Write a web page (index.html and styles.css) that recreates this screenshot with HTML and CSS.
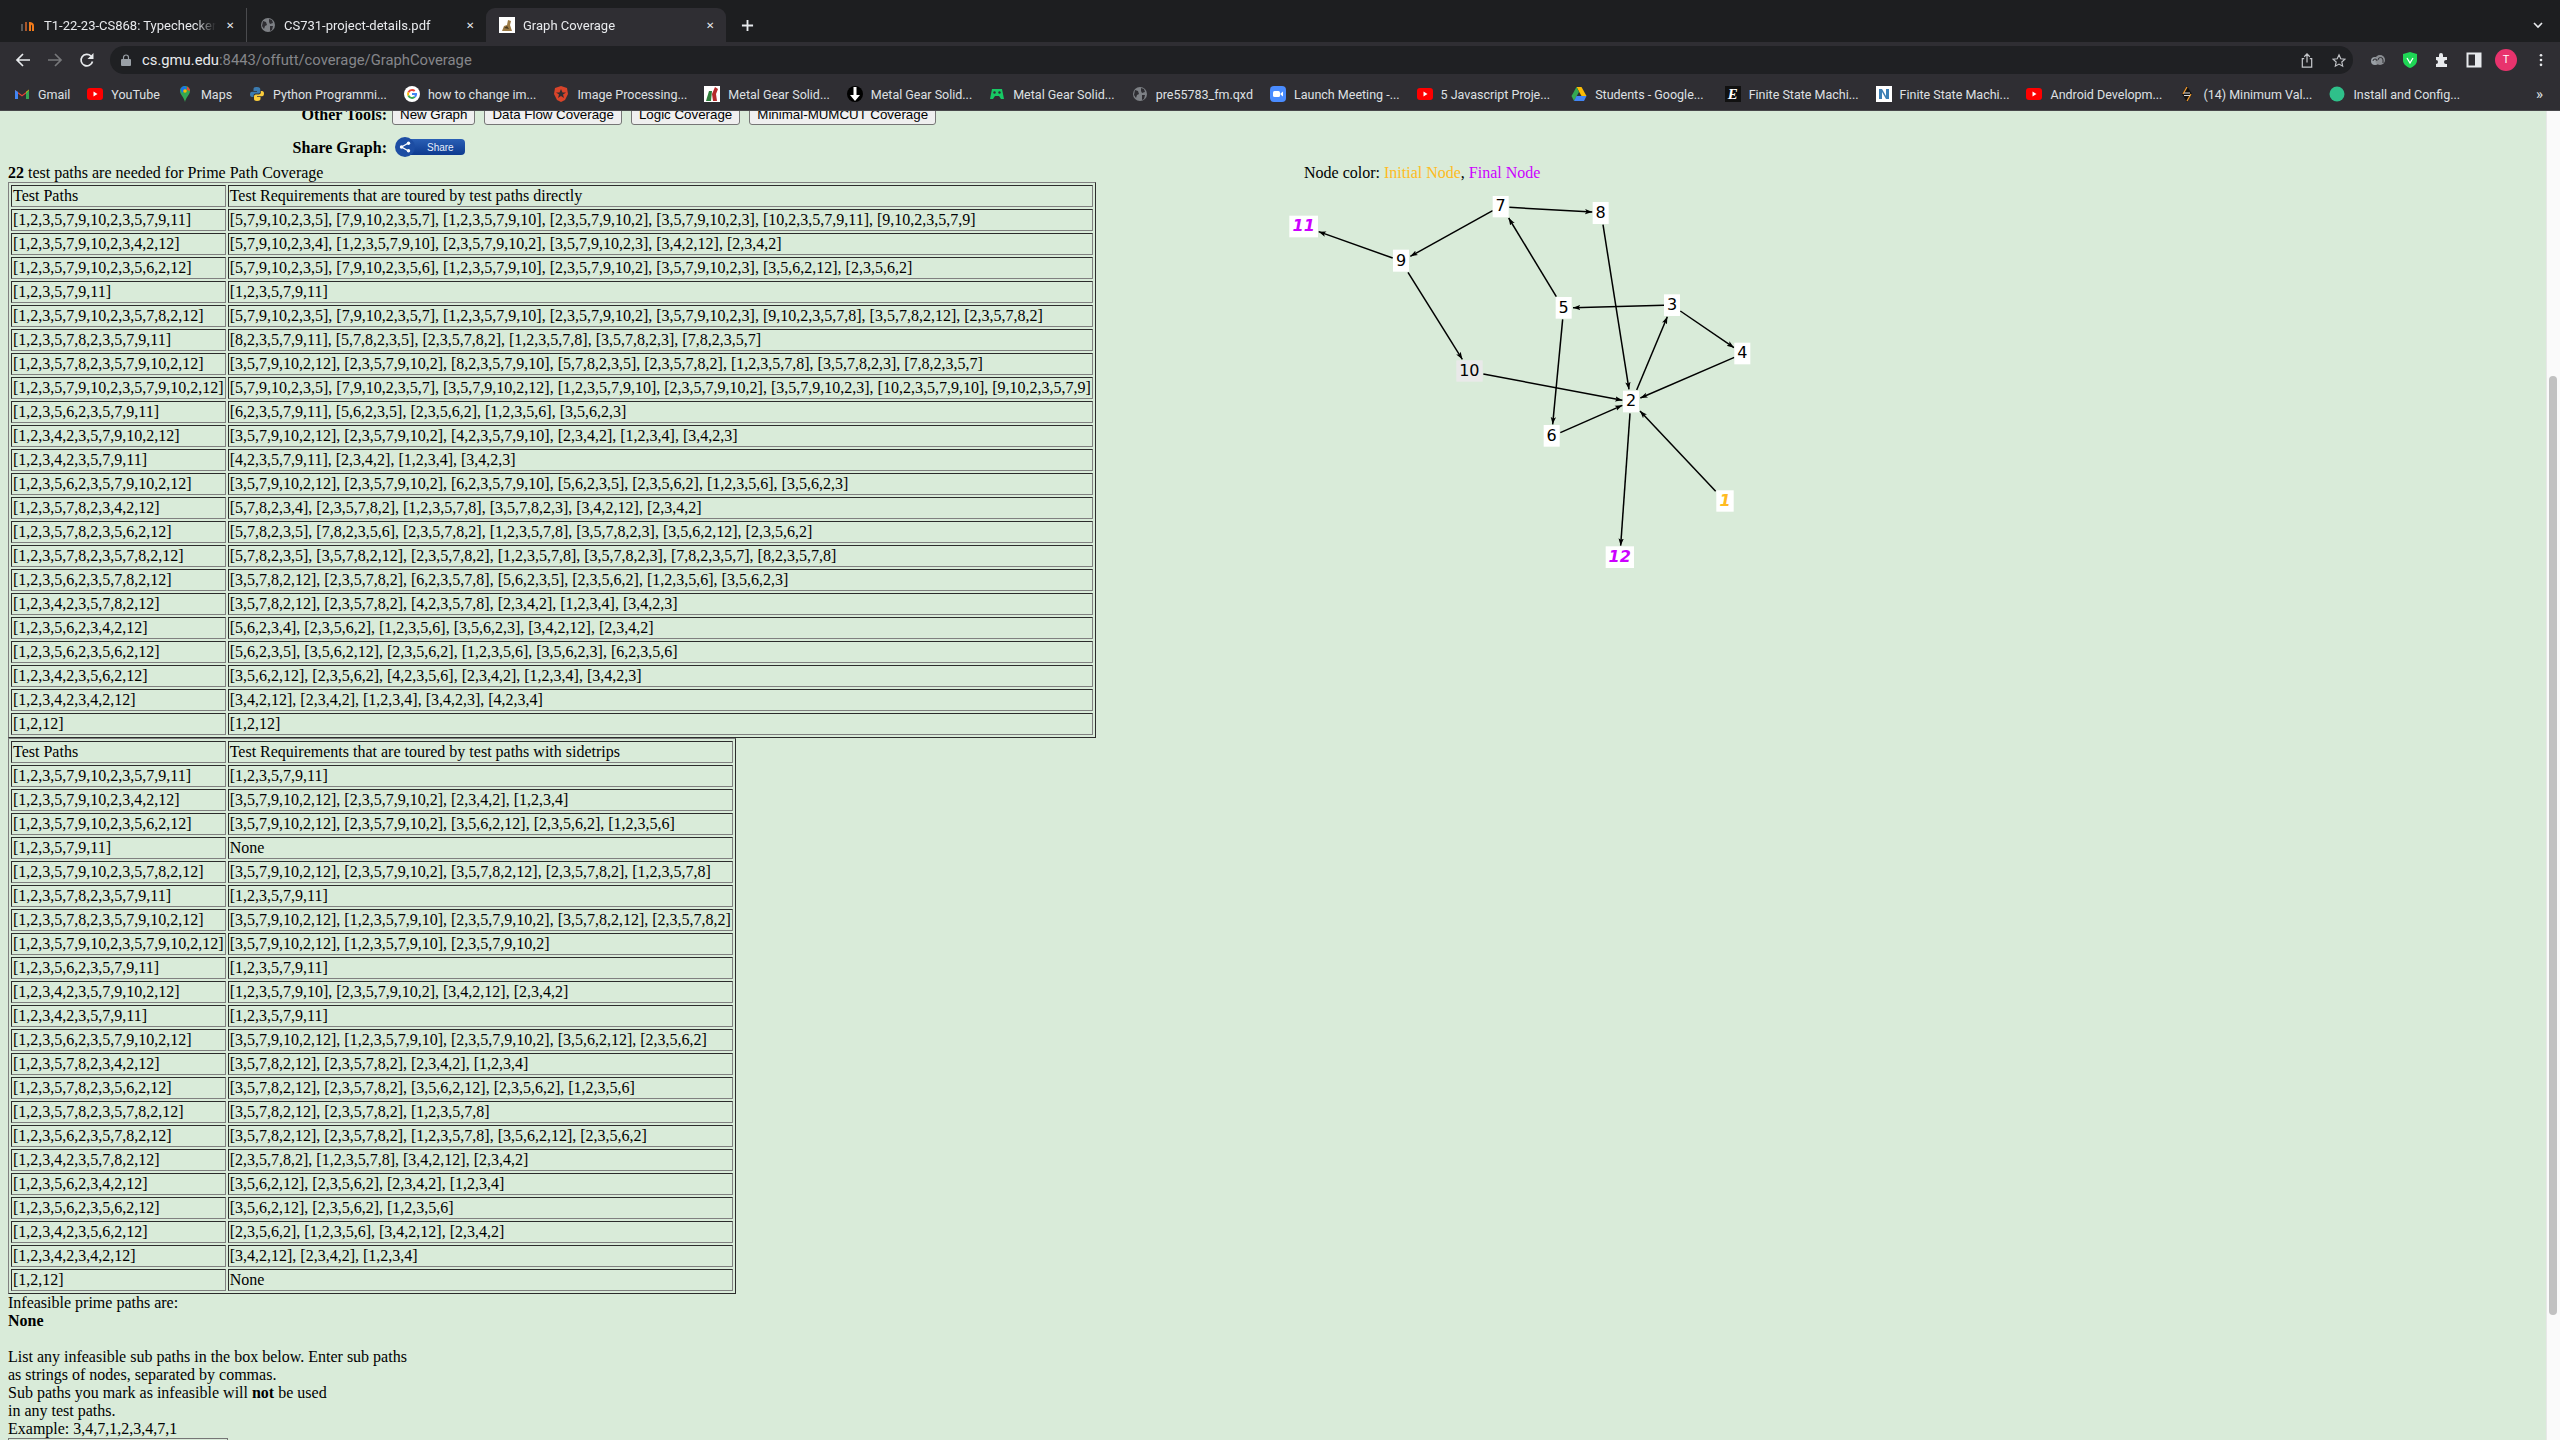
FILE: index.html

```html
<!DOCTYPE html>
<html>
<head>
  <title>Graph Coverage</title>
  <link rel="stylesheet" href="styles.css">
</head>
<body>
  <svg class="defs" width="0" height="0">
    <symbol id="ic-yt" viewBox="0 0 16 16"><rect x="0" y="2" width="16" height="12" rx="3" fill="#f00"/><path d="M6.5 5.5l4 2.5-4 2.5z" fill="#fff"/></symbol>
    <symbol id="ic-globe" viewBox="0 0 16 16"><circle cx="8" cy="8" r="7" fill="#7d8085"/><path d="M3 4l3 1 1 3-2 1-1 3-2-3zM9 2l3 1 1 3-3 1-1-2zM10 9l3 0-1 4-2 1z" fill="#2f2e33"/></symbol>
  </svg>

  <div class="chrome">
    <div class="tabstrip">
      <div class="tab first">
        <svg class="fav" viewBox="0 0 16 16"><path d="M1 7h2v7H1z" fill="#5a5a5a"/><path d="M5 5h2v9H5z" fill="#a8562a"/><path d="M9 5c3 0 5 1 5 4v5h-2V9c0-1-1-2-3-2z" fill="#f07a1a"/><path d="M9 7h2v7H9z" fill="#f07a1a"/></svg>
        <span class="tab-title">T1-22-23-CS868: Typechecker</span>
        <span class="tab-close">&#10005;</span>
      </div>
      <div class="tab second">
        <svg class="fav"><use href="#ic-globe"/></svg>
        <span class="tab-title">CS731-project-details.pdf</span>
        <span class="tab-close">&#10005;</span>
      </div>
      <div class="tab active">
        <svg class="fav" viewBox="0 0 16 16"><rect width="16" height="16" fill="#fff"/><path d="M3 14l2-5 3-1 1-5 3 1-1 4 2 6z" fill="#9b7a45"/><path d="M5 11l3-2 2 3z" fill="#4a3a20"/></svg>
        <span class="tab-title">Graph Coverage</span>
        <span class="tab-close">&#10005;</span>
      </div>
      <svg class="new-tab" viewBox="0 0 14 14"><path d="M7 1v12M1 7h12" stroke="#e8eaed" stroke-width="2"/></svg>
      <svg class="tab-list" viewBox="0 0 12 12"><path d="M2 4l4 4 4-4" fill="none" stroke="#e8eaed" stroke-width="1.6"/></svg>
    </div>

    <div class="toolbar">
      <svg class="nav" viewBox="0 0 16 16"><path d="M15 8H2M8 2L2 8l6 6" fill="none" stroke="#e8eaed" stroke-width="1.7"/></svg>
      <svg class="nav" viewBox="0 0 16 16"><path d="M1 8h13M8 2l6 6-6 6" fill="none" stroke="#77787b" stroke-width="1.7"/></svg>
      <svg class="nav" viewBox="0 0 16 16"><path d="M13.5 9.5A5.8 5.8 0 1 1 12 4" fill="none" stroke="#e8eaed" stroke-width="1.7"/><path d="M14.5 1v6h-6z" fill="#e8eaed"/></svg>
      <div class="omnibox">
        <svg class="lock" viewBox="0 0 10 12"><path d="M2.5 5V3.500a2.500 2.500 0 0 1 5 0V5" fill="none" stroke="#9aa0a6" stroke-width="1.200"/><rect y="5" width="10" height="7" rx="1" fill="#9aa0a6"/></svg>
        <span class="url"><span class="host">cs.gmu.edu</span>:8443/offutt/coverage/GraphCoverage</span>
        <svg class="omni-ic" viewBox="0 0 14 16"><path d="M7 10V1M4 4l3-3 3 3M4 6H2v9h10V6h-2" fill="none" stroke="#c4c6ca" stroke-width="1.300"/></svg>
        <svg class="omni-ic" viewBox="0 0 16 16"><path d="M8 1.500l2 4.500 4.800.5-3.600 3.200 1 4.800L8 12.100l-4.200 2.400 1-4.800L1.200 6.500 6 6z" fill="none" stroke="#c4c6ca" stroke-width="1.300"/></svg>
      </div>
      <div class="actions">
        <svg class="act" viewBox="0 0 16 16"><circle cx="5" cy="9" r="4" fill="#9aa0a6"/><circle cx="10" cy="8" r="5" fill="#8b8e93"/><path d="M3 9a2 2 0 0 1 4 0M8 8a2.500 2.500 0 0 1 5 0v3" fill="none" stroke="#2f2e33" stroke-width="1"/></svg>
        <svg class="act" viewBox="0 0 16 16"><path d="M8 0l7 2v6c0 4-3 6.500-7 8-4-1.500-7-4-7-8V2z" fill="#1fd655"/><path d="M5 6l3 5 3-5" fill="none" stroke="#fff" stroke-width="1.300"/></svg>
        <svg class="act" viewBox="0 0 16 16"><path d="M2 5h3V3a2 2 0 0 1 4 0v2h4v3h-1a2 2 0 0 0 0 4h1v3H2v-3a2 2 0 0 0 0-4z" fill="#e8eaed"/></svg>
        <svg class="act" viewBox="0 0 16 16"><rect x="1.500" y="1.500" width="13" height="13" fill="none" stroke="#e8eaed" stroke-width="2"/><rect x="9" y="2" width="6" height="12" fill="#e8eaed"/></svg>
        <span class="avatar">T</span>
        <svg class="dots" viewBox="0 0 4 16"><circle cx="2" cy="2.500" r="1.500" fill="#e8eaed"/><circle cx="2" cy="8" r="1.500" fill="#e8eaed"/><circle cx="2" cy="13.500" r="1.500" fill="#e8eaed"/></svg>
      </div>
    </div>

    <div class="bookmarks">
      <span class="bm"><svg class="fav" viewBox="0 0 16 16"><path d="M1 13V4l7 5 7-5v9h-3V7.500L8 10.500 4 7.500V13z" fill="#ea4335"/><path d="M1 4v9h3V6z" fill="#4285f4"/><path d="M15 4v9h-3V6z" fill="#34a853"/><path d="M12 6l3-2.500V4l-3 3z" fill="#fbbc04"/></svg><span class="bm-text">Gmail</span></span>
      <span class="bm"><svg class="fav"><use href="#ic-yt"/></svg><span class="bm-text">YouTube</span></span>
      <span class="bm"><svg class="fav" viewBox="0 0 16 16"><path d="M8 0c3 0 5 2.300 5 5 0 3.500-4 6-5 11-1-5-5-7.500-5-11 0-2.700 2-5 5-5z" fill="#34a853"/><path d="M3.500 3C4.500 1 6 0 8 0l2 2-5 5z" fill="#1a73e8"/><path d="M10 .5c1.500.5 3 2.500 3 4.500l-3-1z" fill="#ea4335"/><circle cx="8" cy="5" r="1.800" fill="#fbbc04"/></svg><span class="bm-text">Maps</span></span>
      <span class="bm"><svg class="fav" viewBox="0 0 16 16"><path d="M8 1c-3 0-3.500 1-3.500 2.500V5H8v.7H3C1.500 5.700 1 7 1 8.500S1.700 11 3 11h1.500V9.500c0-1.200 1-2 2-2h3c1 0 1.800-.8 1.800-2V3.500C11.300 2 10.500 1 8 1z" fill="#3b7bb0"/><path d="M8 15c3 0 3.500-1 3.500-2.500V11H8v-.7h5c1.500 0 2-1.300 2-2.800S14.300 5 13 5h-1.200v1.500c0 1.200-1 2-2 2h-3c-1 0-1.800.8-1.800 2v2C5 14 5.500 15 8 15z" fill="#fbcd3c"/></svg><span class="bm-text">Python Programmi...</span></span>
      <span class="bm"><svg class="fav" viewBox="0 0 16 16"><circle cx="8" cy="8" r="8" fill="#fff"/><path d="M8 3a5 5 0 0 1 3.400 1.300L10 5.700A3 3 0 0 0 5.200 7L3.600 5.700A5 5 0 0 1 8 3z" fill="#ea4335"/><path d="M3.600 5.700L5.200 7a3 3 0 0 0 0 2L3.600 10.300a5 5 0 0 1 0-4.600z" fill="#fbbc04"/><path d="M3.600 10.300L5.200 9A3 3 0 0 0 10 10.300l1.500 1.200A5 5 0 0 1 3.600 10.300z" fill="#34a853"/><path d="M13 7H8v2h2.800a2.500 2.500 0 0 1-.8 1.300l1.500 1.200C12.600 10.500 13.300 9 13 7z" fill="#4285f4"/></svg><span class="bm-text">how to change im...</span></span>
      <span class="bm"><svg class="fav" viewBox="0 0 16 16"><path d="M8 0l6 2 1 6-3 6-4 2-4-2-3-6 1-6z" fill="#d9442a"/><path d="M8 3l1.500 3.500H13l-3 2 1 3.500-3-2-3 2 1-3.500-3-2h3.500z" fill="#2f2e33"/></svg><span class="bm-text">Image Processing...</span></span>
      <span class="bm"><svg class="fav" viewBox="0 0 16 16"><rect width="16" height="16" fill="#fff"/><path d="M2 15L5 5h3l-1 10z" fill="#2f7d3a"/><path d="M8 8l3-7 3 2-2 5 1 7H9z" fill="#b52a2a"/></svg><span class="bm-text">Metal Gear Solid...</span></span>
      <span class="bm"><svg class="fav" viewBox="0 0 16 16"><circle cx="8" cy="8" r="8" fill="#000"/><path d="M6.500 1h3v8H13l-5 6-5-6h3.500z" fill="#fff"/></svg><span class="bm-text">Metal Gear Solid...</span></span>
      <span class="bm"><svg class="fav" viewBox="0 0 16 16"><path d="M3 3h10l2 10-3 0-2-3H6l-2 3H1z" fill="#17c964"/><circle cx="5.500" cy="6.500" r="1.200" fill="#2f2e33"/><circle cx="10.500" cy="6.500" r="1.200" fill="#2f2e33"/></svg><span class="bm-text">Metal Gear Solid...</span></span>
      <span class="bm"><svg class="fav"><use href="#ic-globe"/></svg><span class="bm-text">pre55783_fm.qxd</span></span>
      <span class="bm"><svg class="fav" viewBox="0 0 16 16"><rect width="16" height="16" rx="4" fill="#4a8cff"/><rect x="3" y="5" width="7" height="6" rx="1.500" fill="#fff"/><path d="M10.500 7.500L13 5.500v5l-2.500-2z" fill="#fff"/></svg><span class="bm-text">Launch Meeting -...</span></span>
      <span class="bm"><svg class="fav"><use href="#ic-yt"/></svg><span class="bm-text">5 Javascript Proje...</span></span>
      <span class="bm wide"><svg class="fav" viewBox="0 0 16 16"><path d="M5.500 1h5l5 9h-5z" fill="#fbbc04"/><path d="M5.500 1L.5 10l2.500 5 5-9z" fill="#34a853"/><path d="M3 15h10l2.500-5H5.500z" fill="#4285f4"/></svg><span class="bm-text">Students - Google...</span></span>
      <span class="bm wide"><span class="e-icon">E</span><span class="bm-text">Finite State Machi...</span></span>
      <span class="bm"><svg class="fav" viewBox="0 0 16 16"><rect width="16" height="16" fill="#fff"/><path d="M3 3h3l4 7V3h3v10h-3L6 6v7H3z" fill="#3b7fb5"/></svg><span class="bm-text">Finite State Machi...</span></span>
      <span class="bm"><svg class="fav"><use href="#ic-yt"/></svg><span class="bm-text">Android Developm...</span></span>
      <span class="bm"><svg class="fav" viewBox="0 0 16 16"><path d="M8 0L3 8l5 8 5-8z" fill="#111"/><path d="M8 1L4 8M8 15l4-7" stroke="#f29a2e" stroke-width="1.300"/><path d="M5 7h6M5 9.500h6" stroke="#ddd" stroke-width="1"/></svg><span class="bm-text">(14) Minimum Val...</span></span>
      <span class="bm"><svg class="fav" viewBox="0 0 16 16"><circle cx="8" cy="8" r="7.500" fill="#2fc08a"/></svg><span class="bm-text">Install and Config...</span></span>
      <span class="bm-more">&raquo;</span>
    </div>
  </div>

  <div class="window">
    <div class="page">
      <div class="tools">
        <div class="tool-row">
          <b class="tool-label">Other Tools:</b>
          <button class="btn">New Graph</button>
          <button class="btn">Data Flow Coverage</button>
          <button class="btn">Logic Coverage</button>
          <button class="btn">Minimal-MUMCUT Coverage</button>
        </div>
        <div class="tool-row share-row">
          <b class="tool-label">Share Graph:</b>
          <span class="share-btn">
            <span class="share-circle"><svg viewBox="0 0 12 12" width="12" height="12"><path d="M9.500 2L2.500 6l7 4" fill="none" stroke="#fff" stroke-width="1.300"/><circle cx="9.500" cy="2.200" r="1.700" fill="#fff"/><circle cx="2.500" cy="6" r="1.700" fill="#fff"/><circle cx="9.500" cy="9.800" r="1.700" fill="#fff"/></svg></span>
            <span class="share-text">Share</span>
          </span>
        </div>
      </div>

      <div class="results">
        <div class="left">
          <div><b>22</b> test paths are needed for Prime Path Coverage</div>
          <table class="paths">
            <tr><td>Test Paths</td><td>Test Requirements that are toured by test paths directly</td></tr>
            <tr><td>[1,2,3,5,7,9,10,2,3,5,7,9,11]</td><td>[5,7,9,10,2,3,5], [7,9,10,2,3,5,7], [1,2,3,5,7,9,10], [2,3,5,7,9,10,2], [3,5,7,9,10,2,3], [10,2,3,5,7,9,11], [9,10,2,3,5,7,9]</td></tr>
            <tr><td>[1,2,3,5,7,9,10,2,3,4,2,12]</td><td>[5,7,9,10,2,3,4], [1,2,3,5,7,9,10], [2,3,5,7,9,10,2], [3,5,7,9,10,2,3], [3,4,2,12], [2,3,4,2]</td></tr>
            <tr><td>[1,2,3,5,7,9,10,2,3,5,6,2,12]</td><td>[5,7,9,10,2,3,5], [7,9,10,2,3,5,6], [1,2,3,5,7,9,10], [2,3,5,7,9,10,2], [3,5,7,9,10,2,3], [3,5,6,2,12], [2,3,5,6,2]</td></tr>
            <tr><td>[1,2,3,5,7,9,11]</td><td>[1,2,3,5,7,9,11]</td></tr>
            <tr><td>[1,2,3,5,7,9,10,2,3,5,7,8,2,12]</td><td>[5,7,9,10,2,3,5], [7,9,10,2,3,5,7], [1,2,3,5,7,9,10], [2,3,5,7,9,10,2], [3,5,7,9,10,2,3], [9,10,2,3,5,7,8], [3,5,7,8,2,12], [2,3,5,7,8,2]</td></tr>
            <tr><td>[1,2,3,5,7,8,2,3,5,7,9,11]</td><td>[8,2,3,5,7,9,11], [5,7,8,2,3,5], [2,3,5,7,8,2], [1,2,3,5,7,8], [3,5,7,8,2,3], [7,8,2,3,5,7]</td></tr>
            <tr><td>[1,2,3,5,7,8,2,3,5,7,9,10,2,12]</td><td>[3,5,7,9,10,2,12], [2,3,5,7,9,10,2], [8,2,3,5,7,9,10], [5,7,8,2,3,5], [2,3,5,7,8,2], [1,2,3,5,7,8], [3,5,7,8,2,3], [7,8,2,3,5,7]</td></tr>
            <tr><td>[1,2,3,5,7,9,10,2,3,5,7,9,10,2,12]</td><td>[5,7,9,10,2,3,5], [7,9,10,2,3,5,7], [3,5,7,9,10,2,12], [1,2,3,5,7,9,10], [2,3,5,7,9,10,2], [3,5,7,9,10,2,3], [10,2,3,5,7,9,10], [9,10,2,3,5,7,9]</td></tr>
            <tr><td>[1,2,3,5,6,2,3,5,7,9,11]</td><td>[6,2,3,5,7,9,11], [5,6,2,3,5], [2,3,5,6,2], [1,2,3,5,6], [3,5,6,2,3]</td></tr>
            <tr><td>[1,2,3,4,2,3,5,7,9,10,2,12]</td><td>[3,5,7,9,10,2,12], [2,3,5,7,9,10,2], [4,2,3,5,7,9,10], [2,3,4,2], [1,2,3,4], [3,4,2,3]</td></tr>
            <tr><td>[1,2,3,4,2,3,5,7,9,11]</td><td>[4,2,3,5,7,9,11], [2,3,4,2], [1,2,3,4], [3,4,2,3]</td></tr>
            <tr><td>[1,2,3,5,6,2,3,5,7,9,10,2,12]</td><td>[3,5,7,9,10,2,12], [2,3,5,7,9,10,2], [6,2,3,5,7,9,10], [5,6,2,3,5], [2,3,5,6,2], [1,2,3,5,6], [3,5,6,2,3]</td></tr>
            <tr><td>[1,2,3,5,7,8,2,3,4,2,12]</td><td>[5,7,8,2,3,4], [2,3,5,7,8,2], [1,2,3,5,7,8], [3,5,7,8,2,3], [3,4,2,12], [2,3,4,2]</td></tr>
            <tr><td>[1,2,3,5,7,8,2,3,5,6,2,12]</td><td>[5,7,8,2,3,5], [7,8,2,3,5,6], [2,3,5,7,8,2], [1,2,3,5,7,8], [3,5,7,8,2,3], [3,5,6,2,12], [2,3,5,6,2]</td></tr>
            <tr><td>[1,2,3,5,7,8,2,3,5,7,8,2,12]</td><td>[5,7,8,2,3,5], [3,5,7,8,2,12], [2,3,5,7,8,2], [1,2,3,5,7,8], [3,5,7,8,2,3], [7,8,2,3,5,7], [8,2,3,5,7,8]</td></tr>
            <tr><td>[1,2,3,5,6,2,3,5,7,8,2,12]</td><td>[3,5,7,8,2,12], [2,3,5,7,8,2], [6,2,3,5,7,8], [5,6,2,3,5], [2,3,5,6,2], [1,2,3,5,6], [3,5,6,2,3]</td></tr>
            <tr><td>[1,2,3,4,2,3,5,7,8,2,12]</td><td>[3,5,7,8,2,12], [2,3,5,7,8,2], [4,2,3,5,7,8], [2,3,4,2], [1,2,3,4], [3,4,2,3]</td></tr>
            <tr><td>[1,2,3,5,6,2,3,4,2,12]</td><td>[5,6,2,3,4], [2,3,5,6,2], [1,2,3,5,6], [3,5,6,2,3], [3,4,2,12], [2,3,4,2]</td></tr>
            <tr><td>[1,2,3,5,6,2,3,5,6,2,12]</td><td>[5,6,2,3,5], [3,5,6,2,12], [2,3,5,6,2], [1,2,3,5,6], [3,5,6,2,3], [6,2,3,5,6]</td></tr>
            <tr><td>[1,2,3,4,2,3,5,6,2,12]</td><td>[3,5,6,2,12], [2,3,5,6,2], [4,2,3,5,6], [2,3,4,2], [1,2,3,4], [3,4,2,3]</td></tr>
            <tr><td>[1,2,3,4,2,3,4,2,12]</td><td>[3,4,2,12], [2,3,4,2], [1,2,3,4], [3,4,2,3], [4,2,3,4]</td></tr>
            <tr><td>[1,2,12]</td><td>[1,2,12]</td></tr>
          </table>
          <table class="paths">
            <tr><td>Test Paths</td><td>Test Requirements that are toured by test paths with sidetrips</td></tr>
            <tr><td>[1,2,3,5,7,9,10,2,3,5,7,9,11]</td><td>[1,2,3,5,7,9,11]</td></tr>
            <tr><td>[1,2,3,5,7,9,10,2,3,4,2,12]</td><td>[3,5,7,9,10,2,12], [2,3,5,7,9,10,2], [2,3,4,2], [1,2,3,4]</td></tr>
            <tr><td>[1,2,3,5,7,9,10,2,3,5,6,2,12]</td><td>[3,5,7,9,10,2,12], [2,3,5,7,9,10,2], [3,5,6,2,12], [2,3,5,6,2], [1,2,3,5,6]</td></tr>
            <tr><td>[1,2,3,5,7,9,11]</td><td>None</td></tr>
            <tr><td>[1,2,3,5,7,9,10,2,3,5,7,8,2,12]</td><td>[3,5,7,9,10,2,12], [2,3,5,7,9,10,2], [3,5,7,8,2,12], [2,3,5,7,8,2], [1,2,3,5,7,8]</td></tr>
            <tr><td>[1,2,3,5,7,8,2,3,5,7,9,11]</td><td>[1,2,3,5,7,9,11]</td></tr>
            <tr><td>[1,2,3,5,7,8,2,3,5,7,9,10,2,12]</td><td>[3,5,7,9,10,2,12], [1,2,3,5,7,9,10], [2,3,5,7,9,10,2], [3,5,7,8,2,12], [2,3,5,7,8,2]</td></tr>
            <tr><td>[1,2,3,5,7,9,10,2,3,5,7,9,10,2,12]</td><td>[3,5,7,9,10,2,12], [1,2,3,5,7,9,10], [2,3,5,7,9,10,2]</td></tr>
            <tr><td>[1,2,3,5,6,2,3,5,7,9,11]</td><td>[1,2,3,5,7,9,11]</td></tr>
            <tr><td>[1,2,3,4,2,3,5,7,9,10,2,12]</td><td>[1,2,3,5,7,9,10], [2,3,5,7,9,10,2], [3,4,2,12], [2,3,4,2]</td></tr>
            <tr><td>[1,2,3,4,2,3,5,7,9,11]</td><td>[1,2,3,5,7,9,11]</td></tr>
            <tr><td>[1,2,3,5,6,2,3,5,7,9,10,2,12]</td><td>[3,5,7,9,10,2,12], [1,2,3,5,7,9,10], [2,3,5,7,9,10,2], [3,5,6,2,12], [2,3,5,6,2]</td></tr>
            <tr><td>[1,2,3,5,7,8,2,3,4,2,12]</td><td>[3,5,7,8,2,12], [2,3,5,7,8,2], [2,3,4,2], [1,2,3,4]</td></tr>
            <tr><td>[1,2,3,5,7,8,2,3,5,6,2,12]</td><td>[3,5,7,8,2,12], [2,3,5,7,8,2], [3,5,6,2,12], [2,3,5,6,2], [1,2,3,5,6]</td></tr>
            <tr><td>[1,2,3,5,7,8,2,3,5,7,8,2,12]</td><td>[3,5,7,8,2,12], [2,3,5,7,8,2], [1,2,3,5,7,8]</td></tr>
            <tr><td>[1,2,3,5,6,2,3,5,7,8,2,12]</td><td>[3,5,7,8,2,12], [2,3,5,7,8,2], [1,2,3,5,7,8], [3,5,6,2,12], [2,3,5,6,2]</td></tr>
            <tr><td>[1,2,3,4,2,3,5,7,8,2,12]</td><td>[2,3,5,7,8,2], [1,2,3,5,7,8], [3,4,2,12], [2,3,4,2]</td></tr>
            <tr><td>[1,2,3,5,6,2,3,4,2,12]</td><td>[3,5,6,2,12], [2,3,5,6,2], [2,3,4,2], [1,2,3,4]</td></tr>
            <tr><td>[1,2,3,5,6,2,3,5,6,2,12]</td><td>[3,5,6,2,12], [2,3,5,6,2], [1,2,3,5,6]</td></tr>
            <tr><td>[1,2,3,4,2,3,5,6,2,12]</td><td>[2,3,5,6,2], [1,2,3,5,6], [3,4,2,12], [2,3,4,2]</td></tr>
            <tr><td>[1,2,3,4,2,3,4,2,12]</td><td>[3,4,2,12], [2,3,4,2], [1,2,3,4]</td></tr>
            <tr><td>[1,2,12]</td><td>None</td></tr>
          </table>
          <div class="infeasible">
            Infeasible prime paths are:<br>
            <b>None</b><br>
            <br>
            List any infeasible sub paths in the box below. Enter sub paths<br>
            as strings of nodes, separated by commas.<br>
            Sub paths you mark as infeasible will <b>not</b> be used<br>
            in any test paths.<br>
            Example: 3,4,7,1,2,3,4,7,1
          </div>
          <div class="subpath-box"></div>
        </div>

        <div class="right">
          <div class="legend">Node color: <span class="initial">Initial Node</span>, <span class="final">Final Node</span></div>
          <svg class="graph" width="520" height="398" viewBox="0 96 1560 1194">
            <defs>
              <marker id="arrow" markerUnits="userSpaceOnUse" markerWidth="24" markerHeight="20" refX="22" refY="10" orient="auto">
                <path d="M0 2L22 10 0 18 5 10z" fill="#000"/>
              </marker>
            </defs>
            <g class="edges">
              <line x1="748" y1="172" x2="997" y2="186"/>
              <line x1="698" y1="182" x2="451" y2="319"/>
              <line x1="398" y1="324" x2="176" y2="245"/>
              <line x1="889" y1="440" x2="746" y2="204"/>
              <line x1="1212" y1="466" x2="939" y2="473"/>
              <line x1="1261" y1="483" x2="1422" y2="593"/>
              <line x1="908" y1="508" x2="878" y2="823"/>
              <line x1="1029" y1="224" x2="1107" y2="718"/>
              <line x1="1130" y1="720" x2="1222" y2="500"/>
              <line x1="1423" y1="622" x2="1141" y2="744"/>
              <line x1="444" y1="367" x2="607" y2="628"/>
              <line x1="670" y1="672" x2="1087" y2="751"/>
              <line x1="901" y1="848" x2="1087" y2="766"/>
              <line x1="1367" y1="1024" x2="1140" y2="783"/>
              <line x1="1110" y1="790" x2="1082" y2="1187"/>
            </g>
            <g class="nodes">
              <rect x="698" y="138" width="48" height="64"/><text x="722" y="184">7</text>
              <rect x="998" y="156" width="48" height="66"/><text x="1022" y="204">8</text>
              <rect x="88" y="197" width="86" height="65"/><text class="final-node" x="131" y="244">11</text>
              <rect x="399" y="299" width="48" height="66"/><text x="423" y="347">9</text>
              <rect x="887" y="441" width="48" height="65"/><text x="911" y="488">5</text>
              <rect x="1212" y="433" width="48" height="65"/><text x="1236" y="480">3</text>
              <rect x="1423" y="578" width="48" height="65"/><text x="1447" y="625">4</text>
              <rect class="selected" x="589" y="631" width="79" height="64"/><text x="628" y="678">10</text>
              <rect x="1089" y="722" width="48" height="65"/><text x="1113" y="769">2</text>
              <rect x="851" y="825" width="48" height="65"/><text x="875" y="872">6</text>
              <rect x="1369" y="1021" width="52" height="64"/><text class="initial-node" x="1395" y="1067">1</text>
              <rect x="1037" y="1189" width="85" height="65"/><text class="final-node" x="1079" y="1236">12</text>
            </g>
          </svg>
        </div>
      </div>
    </div>
    <div class="scrollbar"><div class="thumb"></div></div>
  </div>
</body>
</html>
```

FILE: styles.css

```css
html, body {
  margin: 0;
  padding: 0;
  height: 100%;
  overflow: hidden;
}

body {
  display: flex;
  flex-direction: column;
  font-family: "Liberation Serif", serif;
  font-size: 16px;
  color: #000;
  background: #d9ebd9;
}

.defs {
  position: absolute;
}

/* browser chrome */
.chrome {
  flex: none;
  font-family: Roboto, sans-serif;
  background: #2f2e33;
  border-bottom: 1px solid #47474a;
  color: #e8eaed;
}

.fav {
  width: 16px;
  height: 16px;
  flex: none;
}

.tabstrip {
  display: flex;
  align-items: flex-end;
  height: 42px;
  padding-left: 7px;
  background: #1d1e20;
}

.tab {
  display: flex;
  align-items: center;
  gap: 8px;
  width: 240px;
  height: 34px;
  box-sizing: border-box;
  padding: 0 10px 0 13px;
  font-size: 13px;
}

.tab.first {
  border-right: 1px solid #4a4b4e;
  background-clip: padding-box;
}

.tab.second {
  width: 239px;
}

.tab.active {
  background: #2f2e33;
  border-radius: 9px 9px 0 0;
}

.tab-title {
  flex: 1;
  white-space: nowrap;
  overflow: hidden;
  -webkit-mask-image: linear-gradient(to right, #000 88%, transparent);
  mask-image: linear-gradient(to right, #000 88%, transparent);
}

.tab-close {
  font-size: 10px;
  width: 12px;
  text-align: center;
}

.new-tab {
  width: 13px;
  height: 13px;
  margin: 0 0 10px 15px;
}

.tab-list {
  width: 12px;
  height: 12px;
  margin: 0 16px 11px auto;
}

.toolbar {
  display: flex;
  align-items: center;
  height: 36px;
  padding-left: 15px;
}

.nav {
  width: 16px;
  height: 16px;
  margin-right: 16px;
}

.omnibox {
  display: flex;
  align-items: center;
  width: 2243px;
  height: 28px;
  margin-left: -1px;
  box-sizing: border-box;
  padding: 0 7px 0 11px;
  border-radius: 14px;
  background: #1f2023;
}

.lock {
  width: 10px;
  height: 12px;
  margin-right: 11px;
}

.url {
  flex: 1;
  font-size: 14.8px;
  color: #85868a;
}

.host {
  color: #e8eaed;
}

.omni-ic {
  width: 14px;
  height: 15px;
  margin-left: 18px;
}

.actions {
  display: flex;
  align-items: center;
  gap: 16px;
  margin-left: 17px;
}

.act {
  width: 16px;
  height: 16px;
}

.avatar {
  width: 22px;
  height: 22px;
  border-radius: 50%;
  margin: 0 -3px;
  background: #e8336d;
  color: #fff;
  font-size: 11px;
  line-height: 22px;
  text-align: center;
}

.dots {
  width: 4px;
  height: 14px;
  margin-left: 9px;
}

.bookmarks {
  display: flex;
  align-items: center;
  gap: 17px;
  height: 32px;
  padding-left: 14px;
  font-size: 12.5px;
  color: #dfe0e3;
}

.bm {
  display: flex;
  align-items: center;
  gap: 8px;
  white-space: nowrap;
}

.bm.wide {
  margin-left: 4px;
}

.e-icon {
  width: 16px;
  height: 16px;
  background: #111;
  color: #fff;
  font: italic bold 15px/16px "Liberation Serif", serif;
  text-align: center;
}

.bm-more {
  margin-left: auto;
  margin-right: 17px;
  font-size: 15px;
}

/* page */
.window {
  flex: 1;
  display: flex;
  min-height: 0;
}

.page {
  flex: 1;
  min-width: 0;
  overflow: hidden;
  padding-left: 8px;
}

.tools {
  margin-top: -7px;
  margin-bottom: 7px;
}

.tool-row {
  display: flex;
  align-items: center;
  gap: 9px;
  height: 21px;
}

.share-row {
  gap: 8px;
  margin-top: 12px;
  height: 20px;
}

.tool-label {
  width: 379px;
  text-align: right;
  margin-right: -4px;
}

.share-row .tool-label {
  margin-right: 0;
  padding-top: 2px;
}

.btn {
  height: 21px;
  padding: 0 7px;
  background: #efefef;
  border: 1px solid #767676;
  border-radius: 3px;
  font-family: "Liberation Sans", sans-serif;
  font-size: 13.33px;
  color: #000;
}

.share-btn {
  display: flex;
  align-items: center;
  width: 70px;
  height: 20px;
  position: relative;
}

.share-btn::before {
  content: "";
  position: absolute;
  left: 6px;
  right: 0;
  top: 2px;
  bottom: 2px;
  border-radius: 4px;
  background: linear-gradient(#2a5fb5, #0d3a8f);
}

.share-circle {
  position: relative;
  display: flex;
  align-items: center;
  justify-content: center;
  width: 20px;
  height: 20px;
  border-radius: 50%;
  background: #1d4da3;
}

.share-text {
  position: relative;
  margin-left: 12px;
  font-family: "Liberation Sans", sans-serif;
  font-size: 10px;
  color: #e6eefc;
}

.results {
  display: flex;
}

.left {
  flex: none;
  width: 1089px;
}

.right {
  flex: none;
  margin-left: 163px;
}

table.paths {
  border: 1px outset gray;
  border-spacing: 2px;
  border-collapse: separate;
}

table.paths td {
  border: 1px inset gray;
  padding: 1px;
  white-space: nowrap;
}

.subpath-box {
  width: 218px;
  height: 30px;
  margin-top: 0;
  border: 1px solid #767676;
}

.legend {
  padding-left: 44px;
}

.initial {
  color: #ffbb22;
}

.final {
  color: #cc00ff;
}

.graph {
  display: block;
}

.edges line {
  stroke: #000;
  stroke-width: 4.5;
  marker-end: url(#arrow);
}

.nodes rect {
  fill: #fff;
}

.nodes rect.selected {
  fill: #e9e9e9;
}

.nodes text {
  font-family: "DejaVu Sans", sans-serif;
  font-size: 48px;
  text-anchor: middle;
  fill: #000;
}

.nodes text.final-node,
.nodes text.initial-node {
  font-weight: bold;
  font-style: italic;
}

.nodes text.final-node {
  fill: #cc00ff;
}

.nodes text.initial-node {
  fill: #ffbb22;
}

.scrollbar {
  flex: none;
  width: 14px;
  background: #fafafa;
  border-left: 1px solid #e8e8e8;
  box-sizing: border-box;
  padding: 265px 2px 0 2px;
}

.thumb {
  width: 8px;
  height: 939px;
  border-radius: 4px;
  background: #c1c1c1;
}
```
